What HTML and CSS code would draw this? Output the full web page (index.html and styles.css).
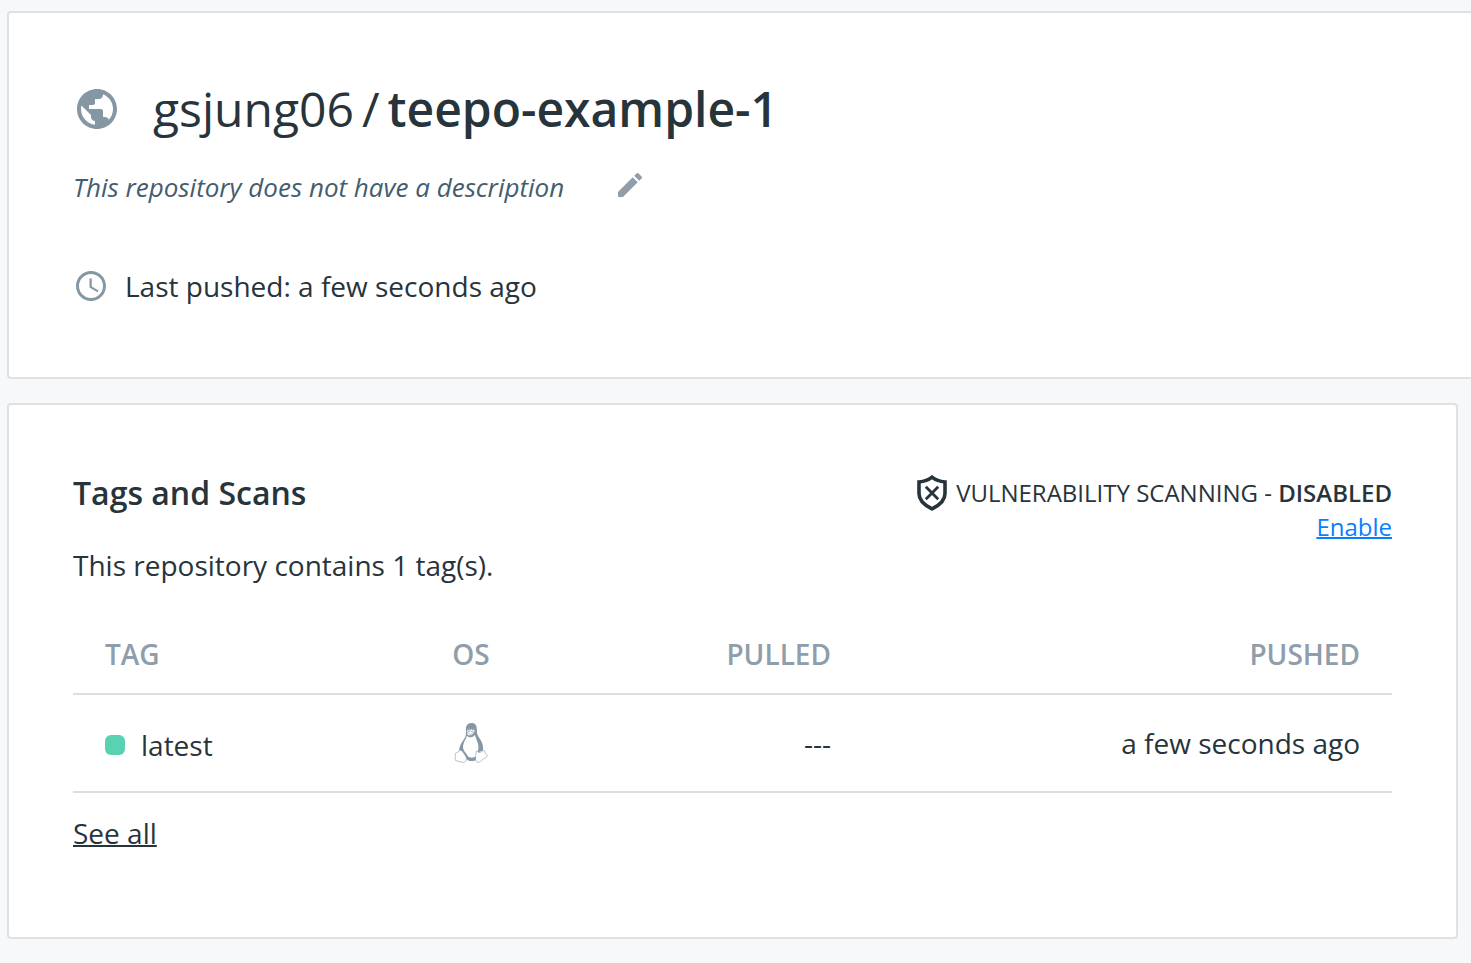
FILE: index.html
```html
<!DOCTYPE html>
<html lang="en">
<head>
<meta charset="utf-8">
<title>gsjung06/teepo-example-1</title>
<link rel="stylesheet" href="styles.css">
</head>
<body>
<main class="page">
  <section class="card card-summary">
    <div class="title-row">
      <svg class="icon-globe" viewBox="0 0 24 24" aria-hidden="true"><path d="M12 2C6.480 2 2 6.480 2 12s4.480 10 10 10 10-4.480 10-10S17.520 2 12 2zm-1 17.930c-3.950-.49-7-3.850-7-7.930 0-.62.080-1.210.21-1.790L9 15v1c0 1.100.9 2 2 2v1.930zm6.900-2.540c-.26-.81-1-1.390-1.900-1.390h-1v-3c0-.55-.45-1-1-1H8v-2h2c.55 0 1-.45 1-1V7h2c1.100 0 2-.9 2-2v-.41c2.930 1.190 5 4.060 5 7.410 0 2.080-.8 3.970-2.100 5.390z"/></svg>
      <h1 class="title"><span>gsjung06</span><span class="slash">/</span><strong>teepo-example-1</strong></h1>
    </div>
    <div class="description-row">
      <p class="description">This repository does not have a description</p>
      <button class="edit" type="button" aria-label="Edit description">
        <svg class="icon-pencil" viewBox="0 0 24 24" aria-hidden="true"><path d="M3 17.250V21h3.750L17.810 9.940l-3.750-3.750L3 17.250zM20.710 7.040c.39-.39.39-1.020 0-1.410l-2.340-2.340c-.39-.39-1.020-.39-1.410 0l-1.830 1.830 3.750 3.750 1.830-1.830z"/></svg>
      </button>
    </div>
    <div class="pushed-row">
      <svg class="icon-clock" viewBox="0 0 24 24" aria-hidden="true"><path d="M11.990 2C6.470 2 2 6.480 2 12s4.470 10 9.990 10C17.520 22 22 17.520 22 12S17.520 2 11.990 2zM12 20A8 8 0 1 1 12 4a8 8 0 0 1 0 16z"/><path d="M12.500 7H11v6l5.250 3.150.75-1.230-4.500-2.670z"/></svg>
      <span>Last pushed: a few seconds ago</span>
    </div>
  </section>

  <section class="card card-tags">
    <header class="tags-header">
      <h2 class="heading">Tags and Scans</h2>
      <div class="scanning">
        <div class="scan-status">
          <svg class="icon-shield" viewBox="0 0 32 36" aria-hidden="true"><path d="M16 2.200C12.500 5 8 6.600 3 7v11.500c0 6.500 5 11.500 13 15.300 8-3.800 13-8.800 13-15.300V7c-5-.4-9.500-2-13-4.800z" stroke-width="3.600"/><path d="M9.800 11.800l12.400 12.400M22.200 11.800L9.800 24.200" stroke-width="2.800"/></svg>
          <span>VULNERABILITY SCANNING - <strong>DISABLED</strong></span>
        </div>
        <a class="enable" href="#">Enable</a>
      </div>
    </header>
    <p class="count">This repository contains 1 tag(s).</p>
    <table class="tags">
      <thead>
        <tr><th class="col-tag">TAG</th><th class="col-os">OS</th><th class="col-pulled">PULLED</th><th class="col-pushed">PUSHED</th></tr>
      </thead>
      <tbody>
        <tr>
          <td class="col-tag"><span class="tag"><span class="dot"></span>latest</span></td>
          <td class="col-os">
            <svg class="icon-linux" viewBox="0 0 34 42" role="img" aria-label="Linux">
              <path class="fill" d="M17.500 1c-4.200 0-5.700 3-5.500 6.500.2 4 .2 6.200-1.700 9.200C8 20.200 5 24 5.200 29c2.500-.5 5 3.500 7.800 8.500 2 2 7 2 9.500 0l1-7 5.500-2c.8-5-1.400-9.500-3.700-12.500-2-2.800-2.500-5-2.500-8.500C22.800 3 21 1 17.500 1z"/>
              <path class="white" d="M13 13.500c1 2.500 5.500 2.500 8-.5.800 4 3.800 8 3.400 13-.2 3.500-.7 6.500-2.400 8.500-2.400 1.500-6.200 1.500-8 0-1.200-3-5.400-6-5-10 .3-4.500 3-7 4-11z"/>
              <path class="white" d="M13.200 8.500c1.200-2.500 2.400-2 3 0 1-2.500 4.200-2.500 4.200.5.600 3-5.700 6.500-7.200 2.800z"/>
              <path class="outline" d="M13.300 10.300l3-1.300 4 1.300-4.200 2.200zM1.300 31.500c1.300-1.300 3-1 4.300-3 2.500-.8 3.500 2.400 5.200 4.500 2 2.500 2.200 4.800-.2 7-2 1.300-4.600-.8-8.800-1.300-1.800-1 .2-2.500-.5-4.200zM22.500 29c1.200-.5.8 1.500 2.500 1.500 2.500.2 3.300-2.200 5-2 1 .2.800 2.200 1.500 3.300 3.500 2.200 1 3.800-1.500 4.700-2.500 1.500-4.500 5.500-7.500 3.200-1.500-1.500-.8-7.500 0-10.700z"/>
              <path class="fill" d="M14 6.800h1.400v1.700H14zM17.800 6.500h1.600v1.800h-1.600z"/>
            </svg>
          </td>
          <td class="col-pulled">---</td>
          <td class="col-pushed">a few seconds ago</td>
        </tr>
      </tbody>
    </table>
    <a class="see-all" href="#">See all</a>
  </section>
</main>
</body>
</html>
```
FILE: styles.css
```css
* {
  box-sizing: border-box;
}

body {
  margin: 0;
  background: #f7f8fa;
  color: #27343b;
  font: 28px/40px "Open Sans", "Noto Sans", sans-serif;
}

h1, h2, p {
  margin: 0;
}

strong {
  font-weight: 600;
}

svg {
  display: block;
  flex: none;
  fill: #8597a2;
}

.page {
  display: flex;
  flex-direction: column;
  gap: 24px;
  padding: 11px 0 24px 7px;
}

.card {
  padding: 64px;
  background: #fff;
  border: 2px solid #dfe1e5;
  border-radius: 4px;
}

.card-summary {
  padding-bottom: 71px;
  border-right: 0;
  border-radius: 4px 0 0 4px;
}

.card-tags {
  margin-right: 13px;
  padding-bottom: 84px;
}

.title-row {
  display: flex;
  align-items: center;
  gap: 32px;
}

.icon-globe {
  width: 48px;
  height: 48px;
}

.title {
  font-size: 48px;
  line-height: 64px;
  font-weight: 400;
}

.slash {
  margin: 0 8px;
}

.description-row {
  display: flex;
  align-items: flex-start;
  gap: 50px;
  margin-top: 28px;
}

.description {
  color: #445d6e;
  font-size: 26px;
  line-height: 36px;
  font-style: italic;
}

.edit {
  padding: 0;
  border: 0;
  background: none;
  cursor: pointer;
}

.icon-pencil {
  width: 32px;
  height: 32px;
  fill: #8f9eaa;
}

.pushed-row {
  display: flex;
  align-items: center;
  gap: 16px;
  margin-top: 61px;
}

.icon-clock {
  width: 36px;
  height: 36px;
}

.tags-header {
  display: flex;
  justify-content: space-between;
}

.heading {
  font-size: 32px;
  line-height: 48px;
  font-weight: 600;
}

.scanning {
  padding-top: 7px;
  font-size: 24px;
  line-height: 34px;
  text-align: right;
}

.scan-status {
  display: flex;
  align-items: center;
  gap: 8px;
}

.icon-shield {
  width: 32px;
  height: 36px;
  margin: -1px 0;
  fill: none;
  stroke: #27343b;
}

.enable {
  display: block;
  color: #087fff;
}

.count {
  margin-top: 1px;
}

.tags {
  width: 100%;
  margin-top: 20px;
  border-collapse: separate;
  border-spacing: 0;
  table-layout: fixed;
}

.tags th,
.tags td {
  padding: 0 32px;
  border-bottom: 2px solid #dcdee0;
  text-align: left;
}

.tags th {
  height: 90px;
  padding-top: 9px;
  color: #8f9eaa;
  font-weight: 600;
}

.tags td {
  height: 98px;
}

.tags .col-tag {
  width: 347px;
}

.tags .col-os {
  width: 102px;
  padding-right: 0;
  padding-left: 0;
  text-align: center;
}

.tags .col-pulled {
  width: 341px;
  text-align: right;
}

.tags .col-pushed {
  text-align: right;
}

.tag {
  display: flex;
  align-items: center;
  gap: 16px;
  padding-top: 4px;
}

.dot {
  width: 20px;
  height: 20px;
  border-radius: 6px;
  background: #58d2b2;
}

.icon-linux {
  width: 34px;
  height: 42px;
  margin: 0 auto;
}

.icon-linux .white {
  fill: #fff;
}

.icon-linux .outline {
  fill: #fff;
  stroke: #8597a2;
  stroke-width: 0.6;
}

.see-all {
  display: inline-block;
  margin-top: 20px;
  color: inherit;
}

a {
  text-decoration-thickness: 2px;
}
```
